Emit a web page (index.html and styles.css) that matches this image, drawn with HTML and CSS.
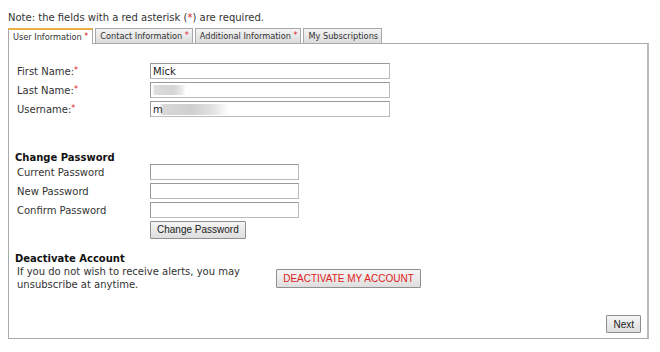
FILE: index.html
```html
<!doctype html>
<html lang="en">
<head>
    <meta charset="UTF-8">
    <title>Account</title>
    <link rel="stylesheet" href="styles.css">
</head>
<body>
<p class="note">Note: the fields with a red asterisk (<span class="req">*</span>) are required.</p>

<ul class="tabs">
    <li class="active">User Information <span class="req">*</span></li>
    <li>Contact Information <span class="req">*</span></li>
    <li>Additional Information <span class="req">*</span></li>
    <li>My Subscriptions</li>
</ul>

<div class="panel">
    <div class="rows">
        <label class="row">
            <span class="lbl">First Name:<span class="req">*</span></span>
            <input type="text" class="txt wide" value="Mick">
        </label>
        <label class="row">
            <span class="lbl">Last Name:<span class="req">*</span></span>
            <input type="text" class="txt wide blur-last" value="">
        </label>
        <label class="row">
            <span class="lbl">Username:<span class="req">*</span></span>
            <input type="text" class="txt wide blur-user" value="m">
        </label>
    </div>

    <h3 class="sub pw-head">Change Password</h3>
    <div class="rows">
        <label class="row">
            <span class="lbl">Current Password</span>
            <input type="password" class="txt short">
        </label>
        <label class="row">
            <span class="lbl">New Password</span>
            <input type="password" class="txt short">
        </label>
        <label class="row">
            <span class="lbl">Confirm Password</span>
            <input type="password" class="txt short">
        </label>
        <div class="row">
            <span class="lbl"></span>
            <button class="btn">Change Password</button>
        </div>
    </div>

    <h3 class="sub da-head">Deactivate Account</h3>
    <div class="deactivate">
        <p>If you do not wish to receive alerts, you may unsubscribe at anytime.</p>
        <button class="btn red">DEACTIVATE MY ACCOUNT</button>
    </div>

    <div class="btn-wrap">
        <button class="btn">Next</button>
    </div>
</div>
</body>
</html>
```

FILE: styles.css
```css
* {
    margin: 0;
    padding: 0;
    box-sizing: border-box;
}

body {
    padding: 12px 8px 0 8px;
    font-family: "DejaVu Sans", Verdana, sans-serif;
    font-size: 10px;
    color: #222;
    background: #fff;
}

.req {
    color: #e02020;
}

.note {
    font-size: 10px;
    line-height: 12px;
    color: #333;
}

.tabs {
    display: flex;
    gap: 2px;
    margin-top: 4px;
    height: 15px;
    list-style: none;
}

.tabs li {
    font-size: 8.2px;
    line-height: 12px;
    padding: 1px 3px 0 4px;
    border: 1px solid #a8a8a8;
    border-bottom: none;
    background: linear-gradient(#f4f4f4, #dcdcdc);
    color: #333;
}

.tabs li.active {
    background: #fff;
    border-top: 2px solid #f0b040;
    padding: 1px 4px 0 4px;
    height: 16px;
    position: relative;
    z-index: 1;
}

.tabs .req {
    font-size: 8px;
    vertical-align: top;
}

.panel {
    width: 641px;
    height: 296px;
    border: 1px solid #aaa;
    border-right: 2px solid #bbb;
    padding: 19px 0 0 7px;
    position: relative;
}

.rows {
    display: flex;
    flex-direction: column;
    gap: 3px;
}

.row {
    display: flex;
    align-items: center;
    height: 16px;
}

.lbl {
    width: 134px;
    padding-left: 1px;
    color: #333;
}

.lbl .req {
    font-size: 8px;
    vertical-align: top;
}

.txt {
    height: 16px;
    border: 1px solid #999;
    border-right-color: #bbb;
    border-bottom-color: #bbb;
    font-family: "DejaVu Sans", Verdana, sans-serif;
    font-size: 10px;
    padding: 0 2px;
    color: #222;
}

.wide {
    width: 240px;
}

.short {
    width: 149px;
}

.blur-last {
    background: linear-gradient(to right, #fff 1px, #dcdcdc 4px, #d4d4d4 22px, #e8e8e8 30px, #fff 35px) no-repeat 0 2px / 100% 10px;
}

.blur-user {
    background: linear-gradient(to right, #fff 8px, #d8d8d8 12px, #cfcfcf 40px, #e2e2e2 62px, #fff 78px) no-repeat 0 2px / 100% 11px;
}

.sub {
    font-size: 10px;
    font-weight: bold;
    color: #111;
    margin-left: -1px;
}

.pw-head {
    margin-top: 35px;
    line-height: 12px;
}

.btn {
    font-family: "Liberation Sans", Arial, sans-serif;
    font-size: 10px;
    color: #222;
    height: 18px;
    padding: 0 6px;
    border: 1px solid #8f8f8f;
    border-radius: 1px;
    background: linear-gradient(#f5f5f5, #dedede);
}

.row .btn {
    margin-top: 1px;
}

.da-head {
    margin-top: 16px;
    line-height: 12px;
}

.deactivate {
    display: flex;
    align-items: center;
    gap: 10px;
}

.deactivate p {
    width: 250px;
    padding-left: 1px;
    line-height: 13px;
    color: #333;
}

.btn.red {
    color: #e02020;
    height: 19px;
    width: 145px;
    padding: 0;
}

.btn-wrap {
    position: absolute;
    right: 6px;
    bottom: 5px;
}

.btn-wrap .btn {
    padding: 0 6px;
}
```
